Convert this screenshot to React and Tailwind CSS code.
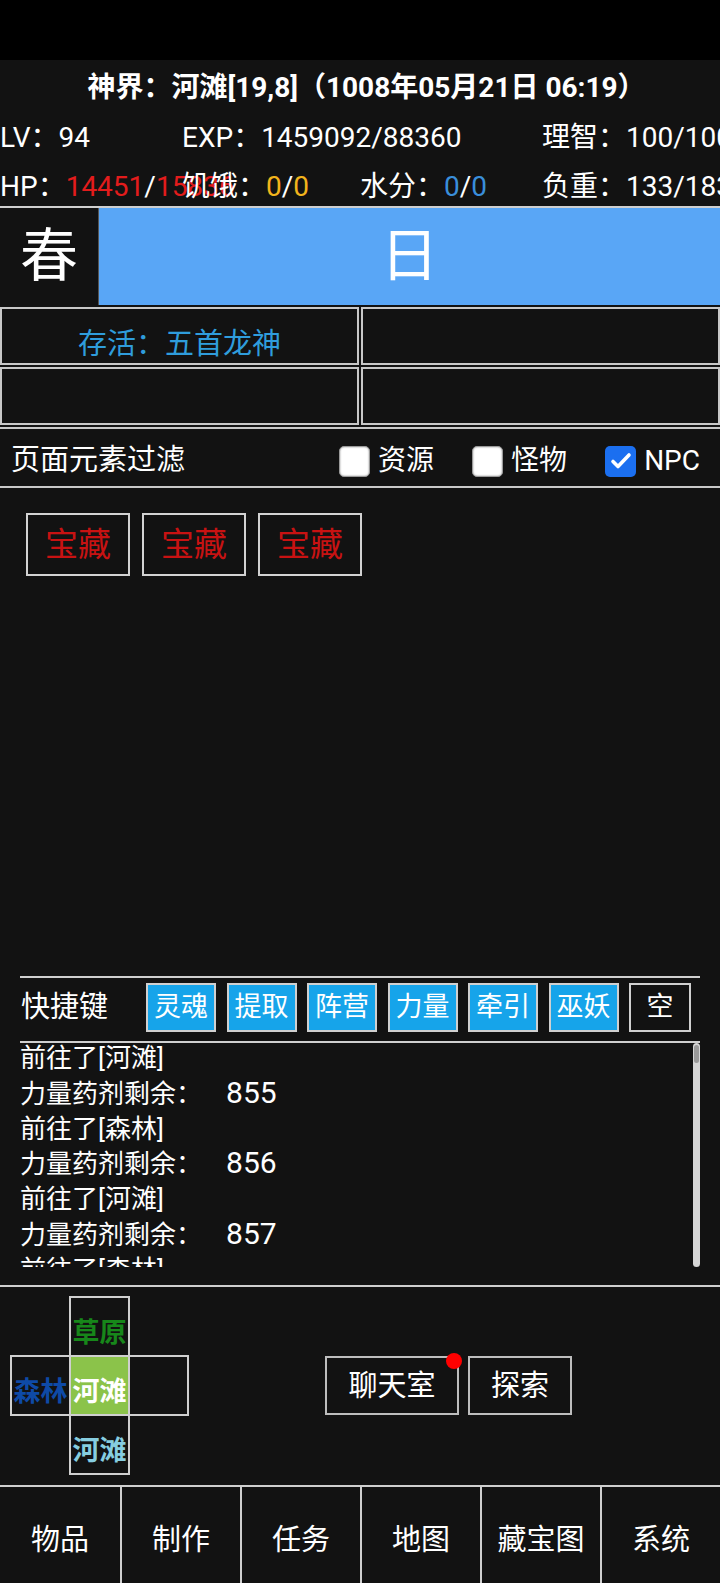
import React from 'react';

const logs = [
  ['前往了[河滩]'],
  ['力量药剂剩余：', '855'],
  ['前往了[森林]'],
  ['力量药剂剩余：', '856'],
  ['前往了[河滩]'],
  ['力量药剂剩余：', '857'],
  ['前往了[森林]'],
];

const shortcuts = ['灵魂', '提取', '阵营', '力量', '牵引', '巫妖'];
const tabs = ['物品', '制作', '任务', '地图', '藏宝图', '系统'];

function Check({ checked, label }) {
  return (
    <div className="flex items-center gap-[8px]">
      {checked ? (
        <span className="w-[31px] h-[31px] rounded-[5px] bg-[#1b6ff0] flex items-center justify-center">
          <svg width="24" height="24" viewBox="0 0 24 24" fill="none">
            <path d="M4 12.5l5 5L20 6" stroke="white" strokeWidth="3.6" strokeLinecap="round" strokeLinejoin="round" />
          </svg>
        </span>
      ) : (
        <span className="w-[31px] h-[31px] rounded-[5px] bg-white border border-[#9a9a9a] shadow-[inset_0_0_2px_#888]" />
      )}
      <span>{label}</span>
    </div>
  );
}

function Cell({ children, className = '' }) {
  return (
    <div className={`w-[59px] h-[59px] outline-2 outline-[#cfcfcf] -outline-offset-1 flex items-center justify-center pt-[14px] font-bold text-[27px] leading-none whitespace-nowrap ${className}`}>
      <span className="-mt-[14px] translate-y-[7px]">{children}</span>
    </div>
  );
}

export default function App() {
  return (
    <div className="w-[720px] h-[1583px] bg-[#121212] text-white flex flex-col overflow-hidden font-[family-name:Roboto,'Noto_Sans_CJK_SC',sans-serif]">
      {/* status bar */}
      <div className="h-[60px] bg-black shrink-0" />

      {/* title */}
      <div className="h-[54px] shrink-0 flex items-center justify-center pt-[2px] pl-[13px] text-[28px] font-bold whitespace-nowrap">
        神界：河滩[19,8]（1008年05月21日 06:19）
      </div>

      {/* stats */}
      <div className="h-[48px] shrink-0 grid grid-cols-[182px_360px_178px] items-center text-[28px] whitespace-nowrap">
        <div>LV：94</div>
        <div>EXP：1459092/88360</div>
        <div>理智：100/100</div>
      </div>
      <div className="h-[44px] shrink-0 grid grid-cols-[182px_178px_182px_178px] items-center pt-[4px] text-[28px] whitespace-nowrap">
        <div>
          HP：<span className="text-[#e31c1c]">14451</span>/<span className="text-[#e31c1c]">15836</span>
        </div>
        <div>
          饥饿：<span className="text-[#f2b41c]">0</span>/<span className="text-[#f2b41c]">0</span>
        </div>
        <div>
          水分：<span className="text-[#3a8edb]">0</span>/<span className="text-[#3a8edb]">0</span>
        </div>
        <div>负重：133/183</div>
      </div>

      {/* season / day */}
      <div className="h-[99px] shrink-0 flex border-t-2 border-[#cfcfcf]">
        <div className="w-[99px] flex items-center justify-center text-[58px] border-r border-[#555]">春</div>
        <div className="flex-1 bg-[#59a6f6] flex items-center justify-center text-[58px]">日</div>
      </div>

      {/* status grid */}
      <div className="shrink-0 grid grid-cols-2 gap-[2px] pt-[2px]">
        <div className="h-[58px] border-2 border-[#c8c8c8] flex items-center justify-center pt-[18px] text-[29px] text-[#2f9ddc]">
          存活：五首龙神
        </div>
        <div className="h-[58px] border-2 border-[#c8c8c8]" />
        <div className="h-[58px] border-2 border-[#c8c8c8]" />
        <div className="h-[58px] border-2 border-[#c8c8c8]" />
      </div>

      {/* filter */}
      <div className="mt-[2px] h-[61px] shrink-0 border-y-2 border-[#c8c8c8] flex items-center pt-[7px] pl-[11px] pr-[20px] text-[28px]">
        <span className="flex-1 text-[29px]">页面元素过滤</span>
        <div className="flex items-center gap-[38px]">
          <Check label="资源" />
          <Check label="怪物" />
          <Check checked label="NPC" />
        </div>
      </div>

      {/* page elements */}
      <div className="h-[488px] shrink-0 flex items-start gap-[12px] pt-[25px] pl-[26px]">
        {[0, 1, 2].map((i) => (
          <div key={i} className="w-[104px] h-[63px] border-2 border-[#d2d2d2] flex items-center justify-center text-[33px] text-[#c81212]">
            宝藏
          </div>
        ))}
      </div>

      {/* shortcuts */}
      <div className="mx-[20px] h-[2px] bg-[#cfcfcf] shrink-0" />
      <div className="h-[63px] shrink-0 flex items-start pt-[5px] pl-[21px]">
        <div className="w-[125px] h-[49px] flex items-center text-[29px]">快捷键</div>
        <div className="flex gap-[10.5px]">
          {shortcuts.map((s) => (
            <div key={s} className="w-[70px] h-[49px] bg-[#16a4ea] border-2 border-[#d0d0d0] flex items-center justify-center text-[27px]">
              {s}
            </div>
          ))}
          <div className="w-[62px] h-[49px] border-2 border-[#d0d0d0] flex items-center justify-center text-[27px]">空</div>
        </div>
      </div>
      <div className="mx-[20px] h-[2px] bg-[#cfcfcf] shrink-0" />

      {/* log */}
      <div className="h-[242px] shrink-0 flex pl-[20px] pr-[20px]">
        <div className="flex-1 h-[224px] overflow-hidden">
          <div className="-mt-[2px] text-[26px] leading-[34.8px] whitespace-nowrap">
            {logs.map(([a, b], i) => (
              <div key={i}>
                {a}
                {b && <span className="ml-[24px] text-[30px]">{b}</span>}
              </div>
            ))}
          </div>
        </div>
        <div className="w-[7px] h-[224px] rounded-full bg-[#d6d6d6] flex flex-col pt-[2px]">
          <div className="h-[18px] mx-[1px] rounded-full bg-[#9a9a9a]" />
        </div>
      </div>

      {/* map + actions */}
      <div className="h-[200px] shrink-0 border-t-2 border-[#cfcfcf] flex items-start">
        <div className="grid grid-cols-[59px_59px_59px] ml-[11px] mt-[10px]">
          <div />
          <Cell className="text-[#17871a]">草原</Cell>
          <div />
          <Cell className="text-[#0e4aa6]">森林</Cell>
          <Cell className="bg-[#8bc34a] text-white">河滩</Cell>
          <Cell />
          <div />
          <Cell className="text-[#86cde0]">河滩</Cell>
          <div />
        </div>
        <div className="flex-1 flex justify-center gap-[9px] mt-[69px] pr-[11px]">
          <div className="relative w-[134px] h-[59px] border-2 border-[#bdbdbd] flex items-center justify-center pt-[3px] text-[29px]">
            聊天室
            <span className="absolute -top-[5px] -right-[5px] w-[16px] h-[16px] rounded-full bg-[#ff0000]" />
          </div>
          <div className="w-[104px] h-[59px] border-2 border-[#bdbdbd] flex items-center justify-center pt-[3px] text-[29px]">探索</div>
        </div>
      </div>

      {/* bottom nav */}
      <div className="flex-1 border-t-2 border-[#cfcfcf] grid grid-cols-6">
        {tabs.map((t, i) => (
          <div key={t} className={`flex items-center justify-center pt-[12px] text-[29px] ${i > 0 ? 'border-l-2 border-[#cfcfcf]' : ''}`}>
            {t}
          </div>
        ))}
      </div>
    </div>
  );
}
